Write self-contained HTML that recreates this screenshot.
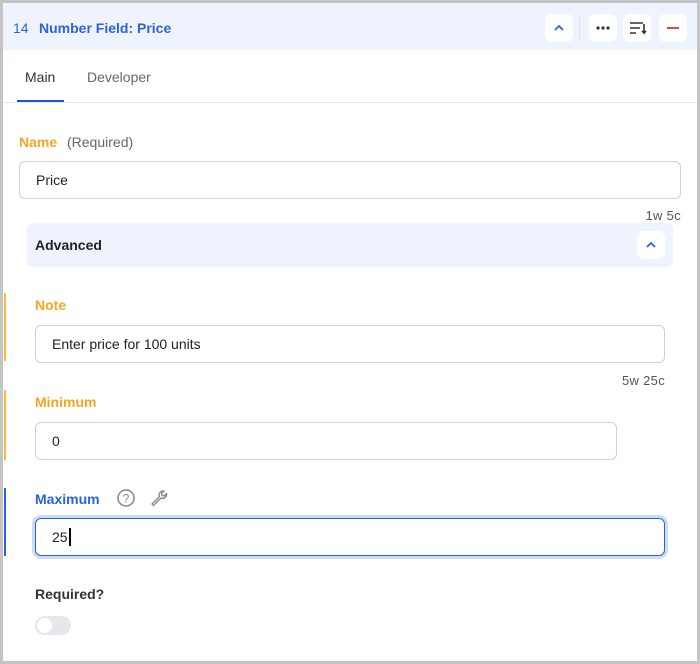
<!DOCTYPE html><html><head><style>
*{box-sizing:border-box;margin:0;padding:0}
body{width:700px;height:664px;background:#c4c4c4;font-family:"Liberation Sans",sans-serif;position:relative;overflow:hidden}
.card{position:absolute;left:3px;top:3px;width:694px;height:658px;background:#fff;overflow:hidden}
.hdr{position:absolute;left:0;top:0;width:694px;height:47px;background:#eef3fd}
.t{position:absolute;white-space:nowrap}
.btn{position:absolute;top:11px;width:28px;height:28px;background:#fff;border-radius:7px}
.lbl{font-size:14px;font-weight:bold}
.inp{position:absolute;border:1px solid #ccd0d8;border-radius:6px;background:#fff;font-size:14px;color:#222;padding-left:16px;display:flex;align-items:center}
.bar{position:absolute;left:1px;width:2px}
.cnt{font-size:13px;color:#555;letter-spacing:0.3px}
</style></head><body><div class="card">
<div class="hdr"></div>
<div class="t" style="left:10px;top:17px;font-size:14px;color:#2b62e3">14</div>
<div class="t" style="left:36px;top:17px;font-size:14px;font-weight:bold;color:#2b62e3">Number Field: Price</div>
<div class="btn" style="left:542px"><svg width="28" height="28"><path d="M10 16l4-4 4 4" stroke="#2b62e3" stroke-width="1.8" fill="none"/></svg></div>
<div style="position:absolute;left:576px;top:14px;width:1px;height:22px;background:#dde2ec"></div>
<div class="btn" style="left:586px"><svg width="28" height="28"><circle cx="9" cy="14" r="1.6" fill="#333"/><circle cx="14" cy="14" r="1.6" fill="#333"/><circle cx="19" cy="14" r="1.6" fill="#333"/></svg></div>
<div class="btn" style="left:620px"><svg width="28" height="28"><path d="M7 9h13M7 14h10M7 19h6M21 10v9l-2-2M21 19l2-2" stroke="#333" stroke-width="1.6" fill="none"/></svg></div>
<div class="btn" style="left:656px"><svg width="28" height="28"><path d="M8 14h12" stroke="#e04545" stroke-width="2"/></svg></div>
<div class="t" style="left:22px;top:66px;font-size:14px;color:#333">Main</div>
<div class="t" style="left:84px;top:66px;font-size:14px;color:#667">Developer</div>
<div style="position:absolute;left:0;top:99px;width:694px;height:1px;background:#e6e8ec"></div>
<div style="position:absolute;left:14px;top:97px;width:47px;height:2px;background:#1f55d8"></div>
<div class="t lbl" style="left:16px;top:131px;color:#f5a623">Name</div>
<div class="t" style="left:64px;top:131px;font-size:14px;color:#666">(Required)</div>
<div class="inp" style="left:16px;top:158px;width:662px;height:38px">Price</div>
<div class="t cnt" style="right:16px;top:205px">1w 5c</div>
<div style="position:absolute;left:24px;top:220px;width:646px;height:44px;background:#eef3fd;border-radius:6px"></div>
<div class="t lbl" style="left:32px;top:234px;color:#222">Advanced</div>
<div class="btn" style="left:634px;top:228px"><svg width="28" height="28"><path d="M10 16l4-4 4 4" stroke="#2b62e3" stroke-width="1.8" fill="none"/></svg></div>
<div class="bar" style="top:290px;height:68px;background:#f5b740"></div>
<div class="t lbl" style="left:32px;top:294px;color:#f5a623">Note</div>
<div class="inp" style="left:32px;top:322px;width:630px;height:38px">Enter price for 100 units</div>
<div class="t cnt" style="right:32px;top:370px">5w 25c</div>
<div class="bar" style="top:387px;height:70px;background:#f5b740"></div>
<div class="t lbl" style="left:32px;top:391px;color:#f5a623">Minimum</div>
<div class="inp" style="left:32px;top:419px;width:582px;height:38px">0</div>
<div class="bar" style="top:485px;height:68px;background:#2b62e3"></div>
<div class="t lbl" style="left:32px;top:488px;color:#2b62e3">Maximum</div>
<svg style="position:absolute;left:113px;top:485px" width="20" height="20"><circle cx="10" cy="10" r="8" stroke="#888" stroke-width="1.5" fill="none"/><text x="10" y="14.5" font-size="12" text-anchor="middle" fill="#888" font-family="Liberation Sans">?</text></svg>
<svg style="position:absolute;left:146px;top:485px" width="20" height="20"><path d="M15 3a4 4 0 0 0-4.5 5.5L3 16l1.5 1.5L12 10a4 4 0 0 0 5.5-4.5l-2.5 2.5-2-.5-.5-2z" stroke="#888" stroke-width="1.4" fill="none" stroke-linejoin="round"/></svg>
<div class="inp" style="left:32px;top:515px;width:630px;height:38px;border:1.5px solid #2b62e3;box-shadow:0 0 0 3px #cfdcf8">25<span style="display:inline-block;width:2px;height:18px;background:#000;margin-left:1px"></span></div>
<div class="t lbl" style="left:32px;top:583px;color:#333">Required?</div>
<div style="position:absolute;left:32px;top:613px;width:36px;height:19px;border-radius:10px;background:#e5e7eb"><div style="position:absolute;left:2px;top:2px;width:15px;height:15px;border-radius:50%;background:#fff"></div></div>
</div></body></html>
